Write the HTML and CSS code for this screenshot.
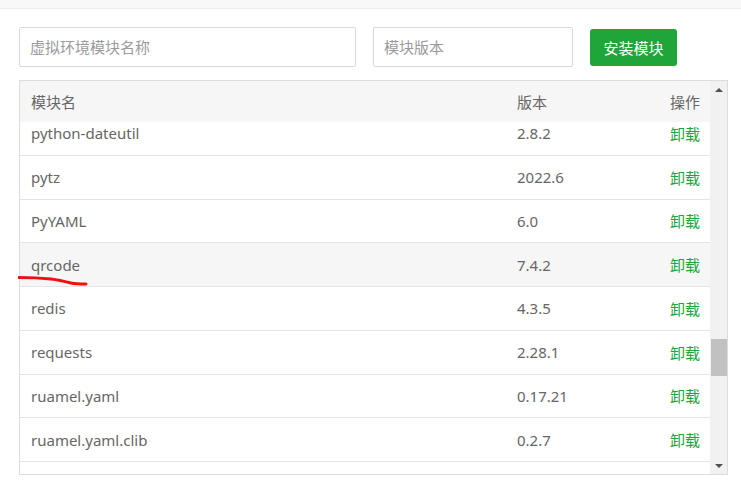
FILE: index.html
```html
<!DOCTYPE html>
<html lang="zh">
<head>
<meta charset="utf-8">
<title>模块管理</title>
<link rel="stylesheet" href="styles.css">
</head>
<body>
<div class="topbar"></div>
<div class="content">
  <div class="toolbar">
    <input class="field field-name" type="text" placeholder="虚拟环境模块名称">
    <input class="field field-ver" type="text" placeholder="模块版本">
    <button class="btn-install">安装模块</button>
  </div>
  <div class="table-wrap">
    <div class="table-main">
      <div class="row head">
        <span>模块名</span><span>版本</span><span class="op-head">操作</span>
      </div>
      <div class="body">
        <div class="body-inner">
          <div class="row"><span>python-dateutil</span><span>2.8.2</span><a class="op">卸载</a></div>
          <div class="row"><span>pytz</span><span>2022.6</span><a class="op">卸载</a></div>
          <div class="row"><span>PyYAML</span><span>6.0</span><a class="op">卸载</a></div>
          <div class="row hover"><span>qrcode</span><span>7.4.2</span><a class="op">卸载</a></div>
          <div class="row"><span>redis</span><span>4.3.5</span><a class="op">卸载</a></div>
          <div class="row"><span>requests</span><span>2.28.1</span><a class="op">卸载</a></div>
          <div class="row"><span>ruamel.yaml</span><span>0.17.21</span><a class="op">卸载</a></div>
          <div class="row"><span>ruamel.yaml.clib</span><span>0.2.7</span><a class="op">卸载</a></div>
          <div class="row"></div>
        </div>
      </div>
    </div>
    <div class="scrollbar">
      <div class="arrow-up"></div>
      <div class="track"><div class="thumb"></div></div>
      <div class="arrow-down"></div>
    </div>
  </div>
</div>
<svg class="mark" width="80" height="16" viewBox="0 0 80 16">
  <path d="M1 3.5 C 12 3.5, 23 4, 33 5 C 41 6, 47 7.5, 53 9 C 58 10, 62 10, 68 10" fill="none" stroke="#ee1111" stroke-width="3" stroke-linecap="round"/>
</svg>
</body>
</html>
```
FILE: styles.css
```css
* { box-sizing: border-box; }
html, body { margin: 0; padding: 0; background: #fff; }
body {
  font-family: "Noto Sans", "Noto Sans CJK SC", sans-serif;
  font-size: 15px;
  color: #666;
  position: relative;
  width: 741px;
  height: 490px;
  overflow: hidden;
}
.topbar {
  height: 9px;
  background: #f8f8f8;
  border-bottom: 1px solid #ececec;
}
.content {
  padding: 18px 14px 0 19px;
}
.toolbar {
  display: flex;
  align-items: center;
  height: 40px;
}
.field {
  height: 40px;
  border: 1px solid #d9d9d9;
  border-radius: 2px;
  padding: 0 10px;
  font-family: inherit;
  font-size: 15px;
  color: #666;
  outline: none;
}
.field::placeholder { color: #9a9a9a; }
.field-name { width: 337px; }
.field-ver { width: 200px; margin-left: 17px; }
.btn-install {
  margin-left: 17px;
  width: 87px;
  height: 37px;
  border: none;
  border-radius: 3px;
  background: #20a53a;
  color: #fff;
  font-family: inherit;
  font-size: 15px;
  padding: 0;
}
.table-wrap {
  margin-top: 13px;
  width: 709px;
  height: 395px;
  border: 1px solid #dddddd;
  display: flex;
}
.table-main {
  flex: 1;
  display: flex;
  flex-direction: column;
  overflow: hidden;
}
.row {
  display: grid;
  grid-template-columns: 486px 1fr auto;
  align-items: center;
  padding: 0 10px 0 11px;
  height: 43.75px;
  border-bottom: 1px solid #e4e4e4;
  flex-shrink: 0;
}
.row.head {
  height: 41px;
  background: #f6f6f6;
  border-bottom: none;
}
.row.hover { background: #f6f6f6; }
.op-head { text-align: right; }
.op { color: #20a53a; text-align: right; }
.body {
  flex: 1;
  overflow: hidden;
}
.body-inner {
  margin-top: -10px;
}
.scrollbar {
  width: 17px;
  background: #f1f1f1;
  display: flex;
  flex-direction: column;
}
.arrow-up, .arrow-down {
  height: 17px;
  display: flex;
  align-items: center;
  justify-content: center;
  flex-shrink: 0;
}
.arrow-up::before {
  content: "";
  border-left: 4px solid transparent;
  border-right: 4px solid transparent;
  border-bottom: 4px solid #505050;
}
.arrow-down::before {
  content: "";
  border-left: 4px solid transparent;
  border-right: 4px solid transparent;
  border-top: 4px solid #505050;
}
.track {
  flex: 1;
  position: relative;
}
.thumb {
  position: absolute;
  left: 1px;
  right: 0;
  top: 241px;
  height: 37px;
  background: #c1c1c1;
}
.mark {
  position: absolute;
  left: 18px;
  top: 274px;
}
```
